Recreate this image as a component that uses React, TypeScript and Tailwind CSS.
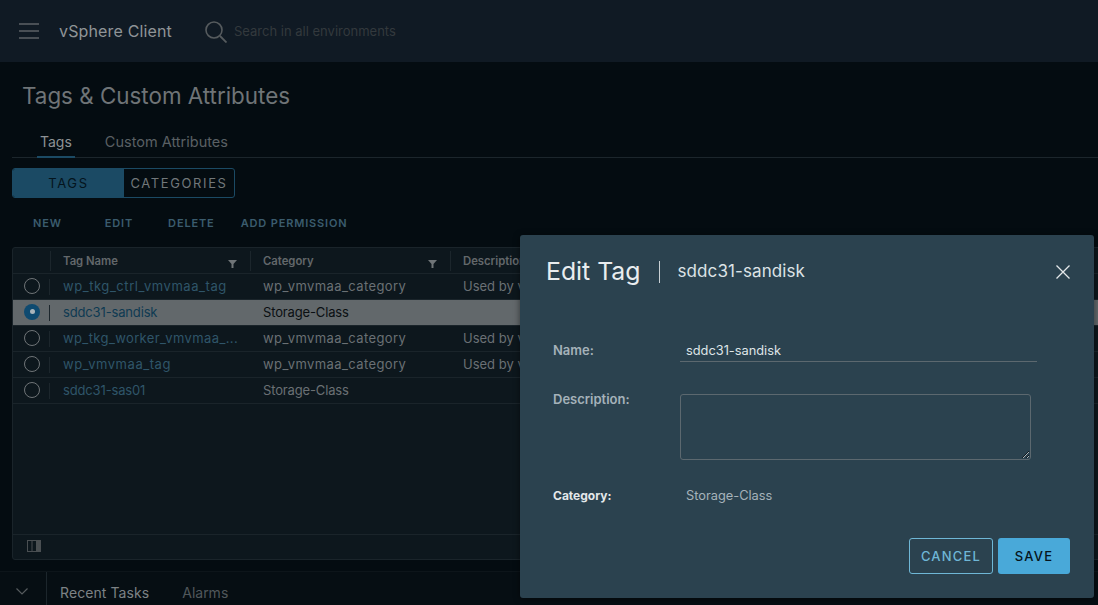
import React from "react";

const font = "[font-family:'Inter','Liberation_Sans',sans-serif]";

const rows = [
  { name: "wp_tkg_ctrl_vmvmaa_tag", cat: "wp_vmvmaa_category", desc: "Used by vSphere", sel: false, wide: true, nameTrack: "tracking-[0.55px]" },
  { name: "sddc31-sandisk", cat: "Storage-Class", desc: "", sel: true, wide: false, nameTrack: "tracking-[-0.15px]" },
  { name: "wp_tkg_worker_vmvmaa_...", cat: "wp_vmvmaa_category", desc: "Used by vSphere", sel: false, wide: true, nameTrack: "tracking-[0.38px]" },
  { name: "wp_vmvmaa_tag", cat: "wp_vmvmaa_category", desc: "Used by vSphere", sel: false, wide: true, nameTrack: "tracking-[0.55px]" },
  { name: "sddc31-sas01", cat: "Storage-Class", desc: "", sel: false, wide: false, nameTrack: "tracking-[-0.15px]" },
];

function Filter() {
  return (
    <svg width="9" height="8" viewBox="0 0 9 8" className="absolute right-[13px] top-[9px]">
      <path d="M0 0h9L5.5 4v4h-2V4z" fill="#6f7477" />
    </svg>
  );
}

export default function App() {
  return (
    <div className={`relative h-[605px] w-[1098px] overflow-hidden bg-[#040c11] ${font}`}>
      <header className="flex h-[62px] items-center bg-[#101a24]">
        <svg width="20" height="16" viewBox="0 0 20 16" className="ml-[19px]">
          <path d="M0 1h20M0 8h20M0 15h20" stroke="#5c6265" strokeWidth="1.3" />
        </svg>
        <span className="ml-[20px] text-[16px] tracking-[0.15px] text-[#8f9497]">vSphere Client</span>
        <svg width="22" height="22" viewBox="0 0 22 22" className="ml-[33px] mt-[2px]">
          <circle cx="9" cy="9" r="8" fill="none" stroke="#565b5e" strokeWidth="1.6" />
          <path d="M15 15L21.5 21.5" stroke="#565b5e" strokeWidth="1.8" />
        </svg>
        <span className="ml-[7px] pt-[2px] text-[13px] text-[#33393d]">Search in all environments</span>
      </header>

      <main>
        <h1 className="pl-[22px] pt-[19px] text-[22.4px] leading-[30px] text-[#6f7477]">Tags &amp; Custom Attributes</h1>
        <nav className="ml-[12px] mt-[18px] flex h-[29px] items-start border-b border-[#1c262c] text-[14px] leading-[26px]">
          <span className="ml-[25px] h-[29px] border-b-[2px] border-[#1b4a64] px-[3px] text-[#8d9295]">Tags</span>
          <span className="ml-[30px] text-[14.5px] text-[#5a6064]">Custom Attributes</span>
        </nav>
        <div className="ml-[12px] mt-[10px] flex h-[30px] w-[223px] overflow-hidden rounded-[3px] border border-[#1b4a64] text-[13px] tracking-[1.6px]">
          <span className="flex w-[111px] items-center justify-center bg-[#1b4a64] pt-[1px] text-[#04141d]">TAGS</span>
          <span className="flex flex-1 items-center justify-center pt-[1px] text-[#71777a]">CATEGORIES</span>
        </div>
        <div className="mt-[18px] flex h-[14px] items-center text-[11px] font-semibold tracking-[0.85px] text-[#3b5c6e]">
          <span className="ml-[33px]">NEW</span>
          <span className="ml-[43px]">EDIT</span>
          <span className="ml-[35px]">DELETE</span>
          <span className="ml-[26px]">ADD PERMISSION</span>
        </div>

        <section className="ml-[12px] mt-[17px] flex h-[313px] w-[1100px] flex-col rounded-[3px] border border-[#1a242a] bg-[#0d171d]">
          <div className="flex h-[26px] shrink-0 items-center border-b border-[#1a242a] text-[11.3px] font-semibold text-[#63686b]">
            <div className="h-[20px] w-[38px] border-r border-[#1c262c]" />
            <div className="relative flex h-[20px] w-[200px] items-center border-r border-[#1c262c] pl-[12px] pt-[2px]">Tag Name<Filter /></div>
            <div className="relative flex h-[20px] w-[200px] items-center border-r border-[#1c262c] pl-[12px] pt-[2px]">Category<Filter /></div>
            <div className="pl-[12px] pt-[2px]">Description</div>
          </div>
          {rows.map((r) => (
            <div
              key={r.name}
              className={`flex h-[26px] shrink-0 items-center border-b border-[#1a242a] text-[13px] ${r.sel ? "bg-[#62686b]" : ""}`}
            >
              <div className="flex h-[16px] w-[37px] items-center border-r border-[#1c262c]">
                {r.sel ? (
                  <span className="ml-[11px] mb-[2px] flex h-[16px] w-[16px] items-center justify-center rounded-full bg-[#0e4a70]">
                    <span className="h-[5px] w-[5px] rounded-full bg-[#a9b4ba]" />
                  </span>
                ) : (
                  <span className="ml-[11px] mb-[2px] h-[16px] w-[16px] rounded-full border border-[#6f7477]" />
                )}
              </div>
              <div className={`w-[200px] truncate pl-[13px] ${r.nameTrack} ${r.sel ? "text-[#0e3a52]" : "text-[#2f5569]"}`}>
                {r.name}
              </div>
              <div
                className={`w-[200px] pl-[13px] ${r.wide ? "tracking-[0.4px]" : "tracking-[-0.15px]"} ${r.sel ? "text-[#0a0f12]" : "text-[#6a7074]"}`}
              >
                {r.cat}
              </div>
              <div className="pl-[13px] whitespace-nowrap text-[#6a7074]">{r.desc}</div>
            </div>
          ))}
          <div className="flex-1" />
          <div className="flex h-[25px] shrink-0 items-center border-t border-[#1a242a] pb-[2px] pl-[14px]">
            <svg width="14" height="12" viewBox="0 0 14 12">
              <rect x="0.5" y="0.5" width="13" height="11" fill="none" stroke="#4a4f52" />
              <path d="M5 0v12" stroke="#4a4f52" />
              <rect x="9" y="0" width="5" height="12" fill="#4a4f52" />
            </svg>
          </div>
        </section>

        <footer className="mt-[11px] flex h-[35px] border-t border-[#0d151a] bg-[#060e13]">
          <div className="flex w-[47px] items-center justify-center border-r border-[#1c262c] pr-[2px] pt-[4px]">
            <svg width="12" height="7" viewBox="0 0 12 7">
              <path d="M0.5 0.5L6 6l5.5-5.5" fill="none" stroke="#565b5e" strokeWidth="1.2" />
            </svg>
          </div>
          <span className="ml-[13px] pt-[12px] text-[14px] leading-[18px] tracking-[0.08px] text-[#7d8285]">Recent Tasks</span>
          <span className="ml-[33px] pt-[12px] text-[14px] leading-[18px] text-[#51575b]">Alarms</span>
        </footer>
      </main>

      <div className="absolute left-[520px] top-[235px] flex h-[363px] w-[574px] flex-col rounded-[3px] bg-[#2b424f] shadow-[0_1px_6px_rgba(0,0,0,0.5)]">
        <div className="flex h-[73px] items-center pl-[26px]">
          <span className="text-[24.8px] text-[#e9edef]">Edit Tag</span>
          <span className="ml-[18px] h-[22px] w-px bg-[#c9d0d4]" />
          <span className="ml-[18px] text-[17px] tracking-[0.1px] text-[#dde3e6]">sddc31-sandisk</span>
          <svg width="14" height="14" viewBox="0 0 14 14" className="ml-auto mr-[24px]">
            <path d="M0.5 0.5l13 13M13.5 0.5l-13 13" stroke="#e4e8ea" strokeWidth="1.3" />
          </svg>
        </div>
        <div className="mt-[20px] flex h-[34px] items-end">
          <span className="mb-[3px] w-[160px] pl-[33px] text-[13px] leading-[18px] font-semibold text-[#a5b2ba]">Name:</span>
          <div className="h-[34px] w-[357px] border-b border-[#5c686f] pl-[6px] pt-[14px] text-[12.8px] leading-[18px] text-[#dfe5e8]">sddc31-sandisk</div>
        </div>
        <div className="mt-[32px] flex h-[66px]">
          <span className="w-[160px] pl-[33px] text-[13px] font-semibold leading-[10px] text-[#a5b2ba]">Description:</span>
          <textarea readOnly className="h-[66px] w-[351px] rounded-[3px] border border-[#5c686f] bg-transparent outline-none" />
        </div>
        <div className="mt-[28px] flex h-[16px] items-center">
          <span className="w-[160px] pl-[33px] text-[12px] font-bold text-[#e4e8ea]">Category:</span>
          <span className="pl-[6px] text-[12.8px] text-[#a5b2ba]">Storage-Class</span>
        </div>
        <div className="mt-[34px] flex justify-end gap-[5px] pr-[24px] text-[13px] tracking-[1.2px]">
          <span className="flex h-[36px] w-[84px] items-center justify-center rounded-[3px] border border-[#6fb7d6] pt-[1px] font-medium text-[#6fb7d6]">CANCEL</span>
          <span className="flex h-[36px] w-[72px] items-center justify-center rounded-[3px] bg-[#49a9d9] pt-[1px] font-medium text-[#06141b]">SAVE</span>
        </div>
      </div>
    </div>
  );
}
